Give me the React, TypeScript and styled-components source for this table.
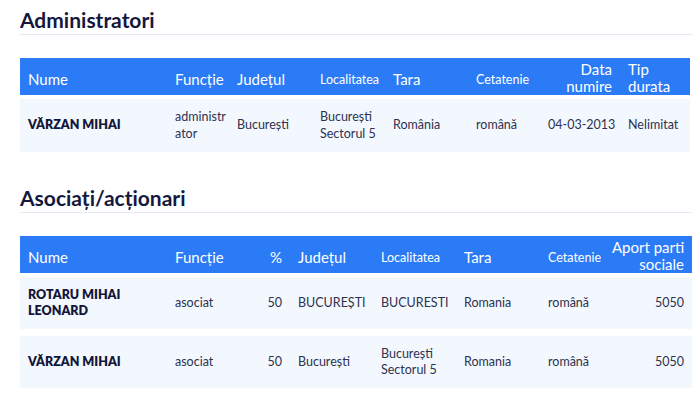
import React from "react";
import styled, { createGlobalStyle } from "styled-components";

const Global = createGlobalStyle`
  html, body { margin: 0; padding: 0; background: #ffffff; }
  body { font-family: Lato, "Noto Sans", sans-serif; color: #2e3150; }
`;

const Page = styled.div`
  width: 672px;
  padding: 0 8px 0 20px;
`;

const Section = styled.section<{ $top: number }>`
  margin-top: ${(p) => p.$top}px;
`;

const Title = styled.h2`
  margin: 0;
  font-size: 21px;
  line-height: 25px;
  font-weight: 700;
  color: #15183d;
  padding-bottom: 2px;
  border-bottom: 1px solid #e4eaf4;
`;

const Table = styled.div<{ $width: number }>`
  margin-top: 23px;
  width: ${(p) => p.$width}px;
  display: flex;
  flex-direction: column;
  gap: 7px;
`;

const HeadRow = styled.div<{ $cols: string }>`
  display: grid;
  grid-template-columns: ${(p) => p.$cols};
  height: 37px;
  padding-top: 3px;
  box-sizing: border-box;
  background: #2b7bf7;
  color: #ffffff;
  align-items: center;
  margin-bottom: -3px;
`;

const HeadCell = styled.div<{ $right?: boolean; $small?: boolean; $single?: boolean }>`
  padding: ${(p) => (p.$single ? "2px 8px 0" : "0 8px")};
  font-size: ${(p) => (p.$small ? "12.5px" : "15px")};
  line-height: 17px;
  font-weight: 400;
  white-space: pre;
  text-align: ${(p) => (p.$right ? "right" : "left")};
  min-width: 0;
`;

const Row = styled.div<{ $cols: string; $height: number }>`
  display: grid;
  grid-template-columns: ${(p) => p.$cols};
  height: ${(p) => p.$height}px;
  background: #f3f8fe;
  align-items: center;
`;

const Cell = styled.div<{ $right?: boolean; $name?: boolean }>`
  padding: 0 8px;
  font-size: 12.5px;
  line-height: 16.5px;
  font-weight: ${(p) => (p.$name ? 800 : 400)};
  color: ${(p) => (p.$name ? "#13163a" : "#2e3150")};
  white-space: pre;
  text-align: ${(p) => (p.$right ? "right" : "left")};
  min-width: 0;
`;

type Col = { label: string; right?: boolean; small?: boolean };

const adminCols = "147px 62px 83px 73px 83px 72px 80px 70px";
const adminHead: Col[] = [
  { label: "Nume" },
  { label: "Funcție" },
  { label: "Județul" },
  { label: "Localitatea", small: true },
  { label: "Tara" },
  { label: "Cetatenie", small: true },
  { label: "Data\nnumire", right: true },
  { label: "Tip\ndurata" },
];
const adminRows = [
  ["VĂRZAN MIHAI", "administr\nator", "București", "București\nSectorul 5", "România", "română", "04-03-2013", "Nelimitat"],
];

const assocCols = "147px 83px 40px 83px 83px 84px 64px 88px";
const assocHead: Col[] = [
  { label: "Nume" },
  { label: "Funcție" },
  { label: "%", right: true },
  { label: "Județul" },
  { label: "Localitatea", small: true },
  { label: "Tara" },
  { label: "Cetatenie", small: true },
  { label: "Aport parti\nsociale", right: true },
];
const assocRows = [
  ["ROTARU MIHAI\nLEONARD", "asociat", "50", "BUCUREȘTI", "BUCURESTI", "Romania", "română", "5050"],
  ["VĂRZAN MIHAI", "asociat", "50", "București", "București\nSectorul 5", "Romania", "română", "5050"],
];

function DataTable({
  cols,
  head,
  rows,
  width,
  rowHeight,
}: {
  cols: string;
  head: Col[];
  rows: string[][];
  width: number;
  rowHeight: number;
}) {
  return (
    <Table $width={width}>
      <HeadRow $cols={cols}>
        {head.map((h) => (
          <HeadCell
            key={h.label}
            $right={h.right}
            $small={h.small}
            $single={!h.label.includes("\n")}
          >
            {h.label}
          </HeadCell>
        ))}
      </HeadRow>
      {rows.map((r, i) => (
        <Row key={i} $cols={cols} $height={rowHeight}>
          {r.map((v, j) => (
            <Cell key={j} $name={j === 0} $right={head[j].right}>
              {v}
            </Cell>
          ))}
        </Row>
      ))}
    </Table>
  );
}

export default function App() {
  return (
    <Page>
      <Global />
      <Section $top={7}>
        <Title>Administratori</Title>
        <DataTable cols={adminCols} head={adminHead} rows={adminRows} width={670} rowHeight={53} />
      </Section>
      <Section $top={33}>
        <Title>Asociați/acționari</Title>
        <DataTable cols={assocCols} head={assocHead} rows={assocRows} width={672} rowHeight={52} />
      </Section>
    </Page>
  );
}
